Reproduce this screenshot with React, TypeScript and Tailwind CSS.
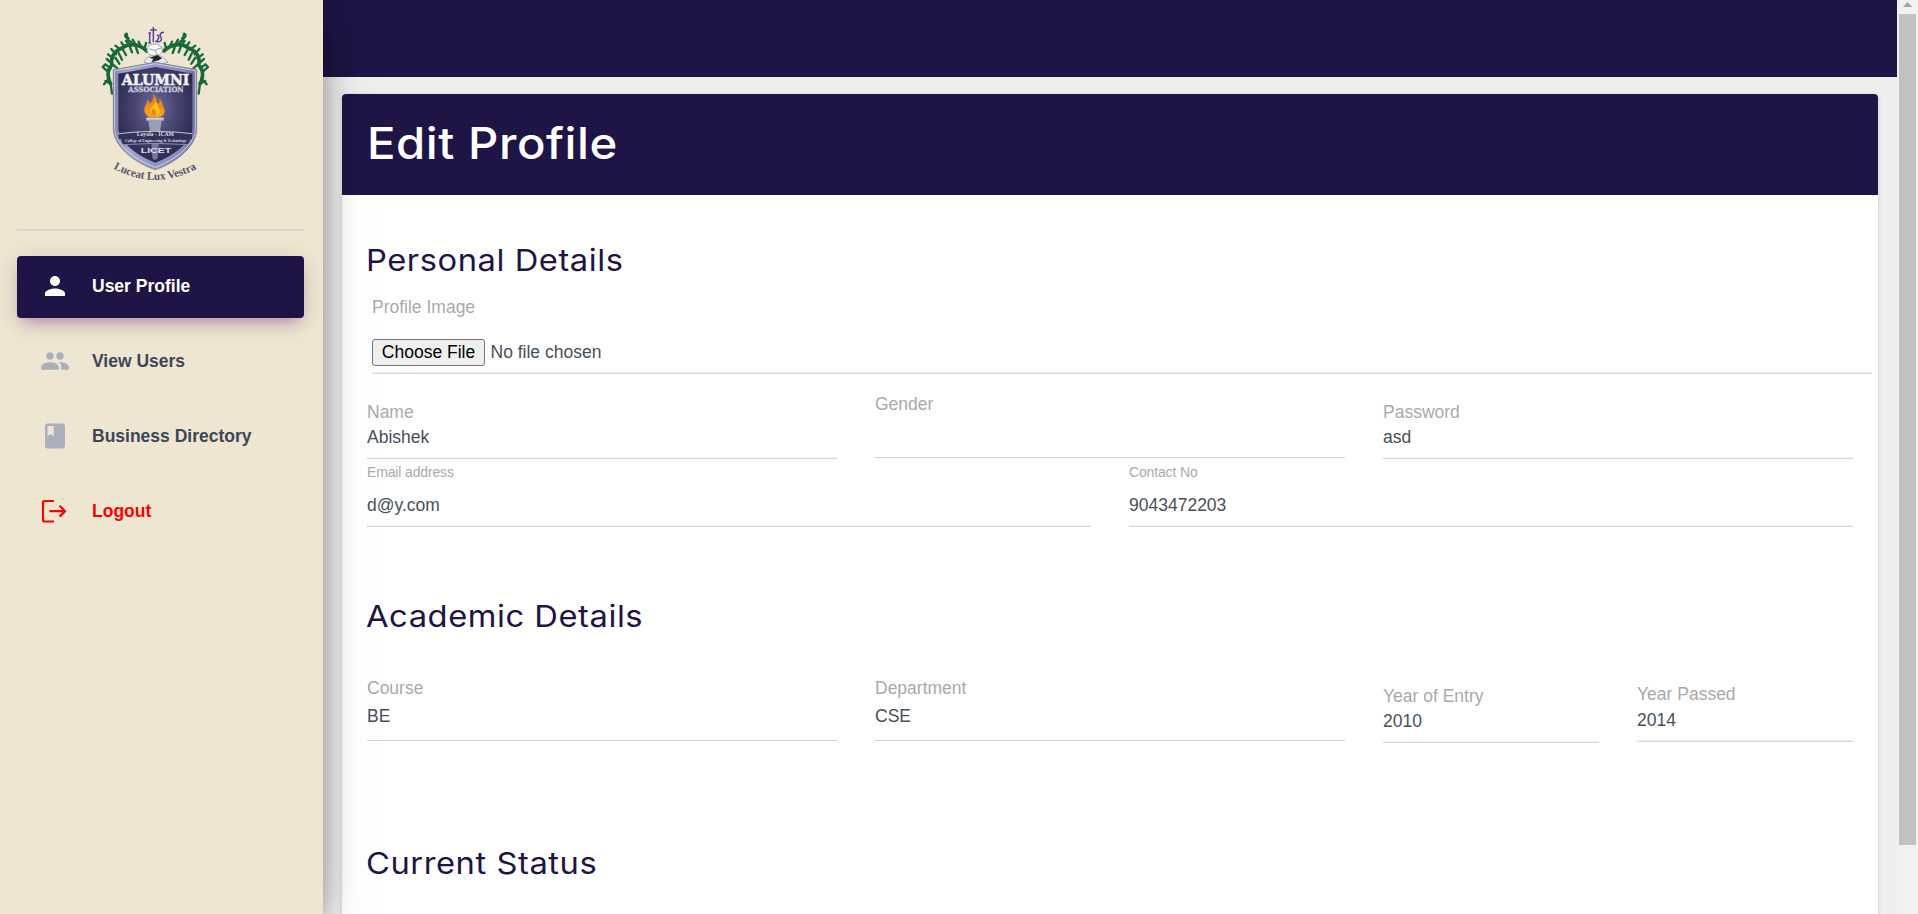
import React from "react";
import { MdBook, MdPeople, MdPerson } from "react-icons/md";

function Mantling() {
  return (
    <g fill="none" stroke="#17693a" strokeLinecap="round" strokeLinejoin="round">
      <path strokeWidth="11" d="M170 108C150 86 116 84 98 98C74 106 60 128 66 150C50 166 52 190 62 206" />
      <path strokeWidth="7" d="M62 206L66 236M62 206L46 198M58 190L42 208M56 172L40 158M62 160L46 148L38 156M66 146L50 132M70 130L54 118M78 118L64 102M92 104L76 92M104 96L94 82M120 90L108 78M136 88L128 74M152 94L146 80M164 100L168 84" />
      <path strokeWidth="7" d="M116 70C106 70 102 60 110 56M110 56L112 66M112 74L124 82M98 102L108 120M86 114L96 134M76 128L88 146M70 150L82 160M120 96L126 112M138 98L144 114" />
    </g>
  );
}

function Crest() {
  return (
    <svg viewBox="0 0 390 525" className="h-[175px] w-[130px]" aria-label="Alumni Association crest">
      <defs>
        <radialGradient id="field" cx="0.5" cy="0.42" r="0.62">
          <stop offset="0" stopColor="#6a6a9c" />
          <stop offset="0.5" stopColor="#45446f" />
          <stop offset="1" stopColor="#26254b" />
        </radialGradient>
        <linearGradient id="rim" x1="0" x2="1">
          <stop offset="0" stopColor="#7c7cac" />
          <stop offset="0.15" stopColor="#a5a5ce" />
          <stop offset="0.85" stopColor="#8787ba" />
          <stop offset="1" stopColor="#6d6da2" />
        </linearGradient>
        <linearGradient id="flame" x1="0" y1="0" x2="0" y2="1">
          <stop offset="0" stopColor="#e2761c" />
          <stop offset="1" stopColor="#f6a714" />
        </linearGradient>
        <path id="motto" d="M70 460 Q198 530 326 458" />
      </defs>

      <Mantling />
      <g transform="translate(392 0) scale(-1 1)">
        <Mantling />
      </g>

      <g stroke="#5646a0" fill="none" strokeWidth="4.500">
        <path d="M190 36v46M180 45h20M179 54v30M175 54h8M175 84h8M200 62c10-6 8 14-4 18M222 52c-18 2-10 12-8 18s-4 12-14 10" />
      </g>
      <ellipse cx="194" cy="105" rx="23" ry="18" fill="#f8f8f8" stroke="#88888c" strokeWidth="2" />
      <path d="M176 102l18 4l22-8M194 106l10 14" stroke="#8f8f95" strokeWidth="2.500" fill="none" />
      <path d="M162 142q4-18 32-22q28 2 40 22l-36 8z" fill="#e7e7ea" stroke="#8b8b90" strokeWidth="2" />
      <path d="M178 128l24-8l14 10l-10 6l-22 6l6-10z" fill="#24242b" />

      <path d="M196 142L320 164V340C320 392 262 442 196 464C130 442 70 392 70 340V164z" fill="url(#rim)" stroke="#85858f" strokeWidth="3" />
      <path d="M196 146L316 167V340C316 388 258 434 196 457C134 434 74 388 74 340V167z" fill="none" stroke="#dcdcec" strokeWidth="2.500" />
      <path d="M196 156L307 176V340C307 380 252 422 196 443C140 422 85 380 85 340V176z" fill="url(#field)" />

      <g fontFamily="'DejaVu Serif','Liberation Serif',serif" fontWeight="700" textAnchor="middle">
        <text x="197" y="209" fontSize="44" fill="#f4f4f8" stroke="#f0f0f6" strokeWidth="1.500" textLength="203" lengthAdjust="spacingAndGlyphs">ALUMNI</text>
        <text x="198" y="232" fontSize="22" fill="#cfcfdd" stroke="#cfcfdd" strokeWidth="0.800" textLength="166" lengthAdjust="spacingAndGlyphs">ASSOCIATION</text>
      </g>

      <path d="M188 234C204 248 196 258 206 266C210 262 208 256 208 250C220 262 216 272 222 280C230 296 214 306 206 307H178C164 300 158 284 168 268C172 262 172 258 170 254C178 258 178 262 180 266C190 256 192 246 188 234z" fill="url(#flame)" />
      <path d="M192 302C176 294 178 282 188 274C196 266 196 262 196 258C206 272 202 278 210 284C212 294 204 302 192 302z" fill="#fbc21c" />
      <path d="M188 300C180 292 186 284 192 280C196 288 200 290 198 302z" fill="#e9881a" />
      <path d="M169 308h52v10h-6l-5 32h-30l-5-32h-6z" fill="#9c9cb2" />
      <path d="M169 308h52v6h-52z" fill="#d0d0da" />
      <path d="M183 350h26l-6 80l-8 6l-8-6z" fill="#77779a" />
      <path d="M86 356Q196 342 306 356V372Q196 364 86 372z" fill="#33325a" />
      <path d="M86 356Q196 342 306 356" stroke="#c4c4d2" strokeWidth="3" fill="none" />
      <path d="M92 372Q196 362 302 372L292 391Q196 380 100 391z" fill="#33325a" />
      <path d="M97 389Q196 381 298 389" stroke="#bcbccc" strokeWidth="2" fill="none" />
      <g textAnchor="middle" fontFamily="'Liberation Serif',serif" fontWeight="700" fill="#dcdce8">
        <text x="196" y="364" fontSize="18" textLength="112" lengthAdjust="spacingAndGlyphs">Loyola - ICAM</text>
        <text x="197" y="381" fontSize="14" textLength="184" lengthAdjust="spacingAndGlyphs">College of Engineering &amp; Technology</text>
        <text x="198" y="414" fontSize="24" fontFamily="'Liberation Sans',sans-serif" textLength="92" lengthAdjust="spacingAndGlyphs">LICET</text>
      </g>
      <text fontFamily="'Liberation Serif',serif" fontWeight="700" fontSize="34" fill="#55556a">
        <textPath href="#motto" textLength="262" lengthAdjust="spacingAndGlyphs">Luceat Lux Vestra</textPath>
      </text>
    </svg>
  );
}

function LogoutIcon() {
  return (
    <svg viewBox="0 0 30 30" className="size-[30px]" fill="none" stroke="currentColor" strokeWidth="2.2">
      <path d="M14 5H4.700Q3 5 3 6.700V23.800Q3 25.500 4.700 25.500H14M9.500 15.200H25.400M19.600 9.800L25 15.200L19.600 20.600" />
    </svg>
  );
}

const navItems = [
  { label: "User Profile", icon: <MdPerson size={30} />, item: "bg-[#1e1445] text-white shadow-[0_5px_25px_0_rgba(0,0,0,0.14),0_9px_13px_-6px_rgba(156,39,176,0.4)]", iconColor: "text-white" },
  { label: "View Users", icon: <MdPeople size={30} />, item: "text-[#3c4858]", iconColor: "text-[#a9afbb]" },
  { label: "Business Directory", icon: <MdBook size={30} />, item: "text-[#3c4858]", iconColor: "text-[#a9afbb]" },
  { label: "Logout", icon: <LogoutIcon />, item: "text-[#ff0000]", iconColor: "text-[#ff0000]" },
];

function Sidebar() {
  return (
    <aside className="relative z-10 flex w-[323px] shrink-0 flex-col bg-[#eee6d1] px-[17px] shadow-[0_20px_48px_-15px_rgba(0,0,0,0.56),0_5px_31px_0_rgba(0,0,0,0.12),0_10px_13px_-6px_rgba(0,0,0,0.2)]">
      <div className="flex h-[231px] w-[287px] border-b-2 border-[#ddd7c7] pt-[15px] pl-[73px]">
        <Crest />
      </div>
      <nav className="mt-[25px] flex w-[287px] flex-col gap-[13px]">
        {navItems.map((n) => (
          <a key={n.label} className={`flex h-[62px] items-center gap-[22px] rounded-[4px] pb-[2px] pl-[23px] text-[17.5px] leading-[20px] font-bold ${n.item}`}>
            <span className={n.iconColor}>{n.icon}</span>
            <span>{n.label}</span>
          </a>
        ))}
      </nav>
    </aside>
  );
}

type FieldProps = {
  label: string;
  value?: string;
  className: string;
  labelClass?: string;
  valueClass?: string;
  select?: boolean;
};

function Field({ label, value, className, labelClass = "text-[17.5px] leading-[20px]", valueClass = "mt-[5px] mb-[10px]", select }: FieldProps) {
  return (
    <div className={`flex flex-col ${className}`}>
      <span className={`text-[#aaaaaa] ${labelClass}`}>{label}</span>
      <span className={`h-[20px] text-[17.5px] leading-[20px] text-[#495057] ${valueClass}`}>{value}</span>
      {select ? <span className="h-px bg-[#d2d2d2]" /> : <Underline />}
    </div>
  );
}

function Underline() {
  return <span className="h-[2px] border-b border-[#d9d9d9] bg-[#f0f0f0]" />;
}

function Heading({ children, className }: { children: string; className: string }) {
  return <h2 className={`ml-[24px] h-[40px] origin-left scale-x-[1.09] self-start font-['Inter',sans-serif] text-[30px] leading-[40px] font-normal tracking-[0.5px] text-[#1e1445] ${className}`}>{children}</h2>;
}

function Scrollbar() {
  return (
    <div className="flex w-[21px] shrink-0 flex-col items-center bg-[#f1f1f1]">
      <svg viewBox="0 0 17 14" className="h-[14px] w-[17px] shrink-0"><path d="M8.500 2L13 7H4z" fill="#a3a3a3" /></svg>
      <div className="h-[831px] w-[17px] bg-[#c1c1c1]" />
    </div>
  );
}

export default function App() {
  const small = "text-[14px] leading-[15px] tracking-[-0.15px]";
  return (
    <div className="flex h-[914px] w-[1918px] overflow-hidden bg-[#eeeeee] font-['Liberation_Sans',Arial,sans-serif]">
      <Sidebar />
      <div className="flex min-w-0 grow flex-col">
        <header className="h-[77px] shrink-0 bg-[#1e1445]" />
        <main className="mx-[19px] mt-[17px] flex h-[900px] shrink-0 flex-col rounded-[4px] bg-white shadow-[0_1px_5px_0_rgba(0,0,0,0.14)]">
          <div className="flex h-[101px] shrink-0 rounded-t-[4px] bg-[#1e1445] pt-[22px] pl-[25px]">
            <h1 className="origin-left scale-x-[1.075] font-['Inter',sans-serif] text-[44px] leading-[54px] font-[450] tracking-[0.5px] text-white">Edit Profile</h1>
          </div>

          <Heading className="mt-[45px]">Personal Details</Heading>
          <div className="mt-[17px] mr-[6px] ml-[30px] flex flex-col">
            <span className="text-[17.5px] leading-[20px] text-[#aaaaaa]">Profile Image</span>
            <div className="mt-[22px] mb-[6px] flex items-center gap-[5.5px] text-[17.5px] leading-[20px]">
              <button className="h-[27px] w-[113px] rounded-[3px] border border-[#767676] bg-[#efefef] pb-[2px] leading-[22px] whitespace-nowrap text-black">Choose File</button>
              <span className="relative -top-px text-[#495057]">No file chosen</span>
            </div>
            <Underline />
          </div>
          <div className="mx-[25px] mt-[20px] grid h-[65px] grid-cols-3 gap-x-[38px]">
            <Field label="Name" value="Abishek" className="pt-[8px]" />
            <Field label="Gender" className="" valueClass="mt-[43px] h-0!" select />
            <Field label="Password" value="asd" className="pt-[8px]" />
          </div>
          <div className="mx-[25px] grid h-[68px] grid-cols-2 gap-x-[38px] pt-[6px]">
            <Field label="Email address" value="d@y.com" className="" labelClass={small} valueClass="mt-[15px] mb-[10px]" />
            <Field label="Contact No" value="9043472203" className="" labelClass={small} valueClass="mt-[15px] mb-[10px]" />
          </div>

          <Heading className="mt-[69px]">Academic Details</Heading>
          <div className="mx-[25px] mt-[42px] grid h-[65px] grid-cols-6 gap-x-[38px]">
            <Field label="Course" value="BE" className="col-span-2" valueClass="mt-[8px] mb-[14px]" select />
            <Field label="Department" value="CSE" className="col-span-2" valueClass="mt-[8px] mb-[14px]" select />
            <Field label="Year of Entry" value="2010" className="pt-[8px]" />
            <Field label="Year Passed" value="2014" className="pt-[6px]" valueClass="mt-[6px] mb-[10px]" />
          </div>

          <Heading className="mt-[100px]">Current Status</Heading>
        </main>
      </div>
      <Scrollbar />
    </div>
  );
}
